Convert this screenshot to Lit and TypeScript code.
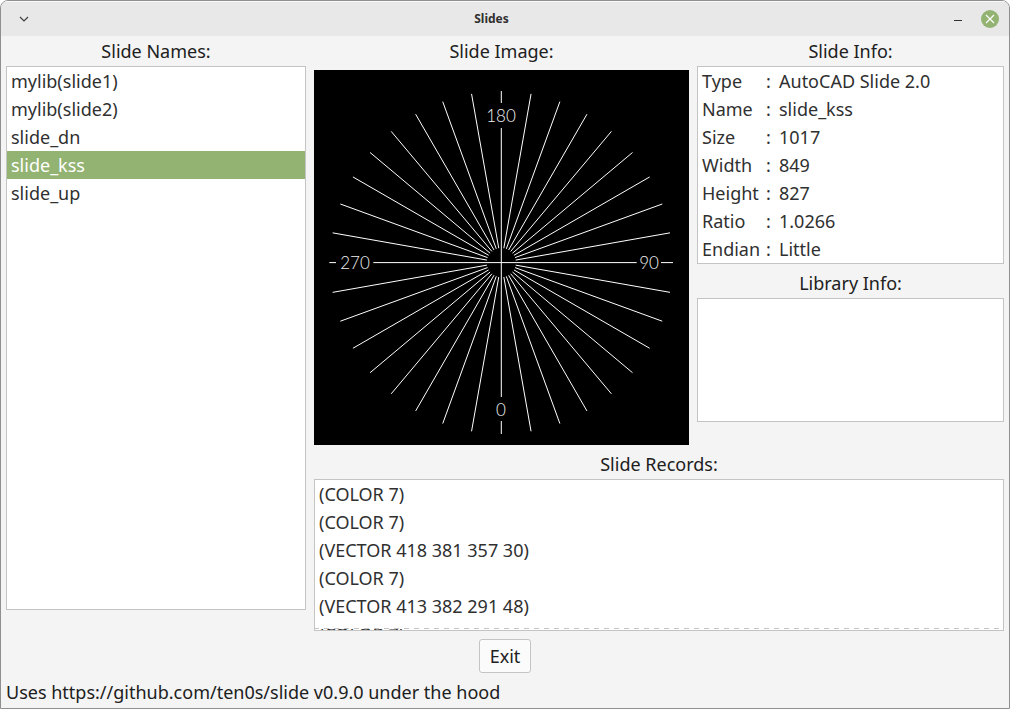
import { LitElement, html, svg, css } from "lit";
import { customElement, state } from "lit/decorators.js";

const NAMES = ["mylib(slide1)", "mylib(slide2)", "slide_dn", "slide_kss", "slide_up"];

const INFO: [string, string][] = [
  ["Type", "AutoCAD Slide 2.0"],
  ["Name", "slide_kss"],
  ["Size", "1017"],
  ["Width", "849"],
  ["Height", "827"],
  ["Ratio", "1.0266"],
  ["Endian", "Little"],
];

const RECORDS = [
  "(COLOR 7)",
  "(COLOR 7)",
  "(VECTOR 418 381 357 30)",
  "(COLOR 7)",
  "(VECTOR 413 382 291 48)",
  "(COLOR 7)",
];

/** Compass-like slide: rays every ten degrees, axes labelled in degrees. */
@customElement("slide-image")
export class SlideImage extends LitElement {
  static styles = css`
    :host { display: block; background: #000; }
    .canvas { display: block; width: 100%; height: auto; }
    .strokes { stroke: #fff; stroke-width: 1; fill: none; }
    .degrees {
      fill: #f0f0f0;
      font-family: "Lato", sans-serif;
      font-weight: 300;
      font-size: 17px;
      text-anchor: middle;
    }
  `;

  render() {
    const cx = 187.3;
    const cy = 192.6;
    const rays = [];
    for (let a = 10; a < 360; a += 10) {
      if (a % 90 === 0) continue;
      const s = Math.sin((a * Math.PI) / 180);
      const c = Math.cos((a * Math.PI) / 180);
      rays.push(svg`<line x1=${cx + 14.6 * s} y1=${cy + 14.6 * c} x2=${cx + 171.3 * s} y2=${cy + 171.3 * c} />`);
    }
    return html`
      <svg class="canvas" viewBox="0 0 375 375" role="img" aria-label="slide_kss">
        <g class="strokes">
          ${rays}
          <path d="M187.3 21V33M187.3 58V327M187.3 351V364" />
          <path d="M15.3 192.6H22M59.3 192.6H322.7M347 192.6H359" />
        </g>
        <g class="degrees">
          <text x="187" y="52">180</text>
          <text x="187" y="346">0</text>
          <text x="41" y="199">270</text>
          <text x="335" y="199">90</text>
        </g>
      </svg>
    `;
  }
}

@customElement("app-root")
export class AppRoot extends LitElement {
  static styles = css`
    :host {
      display: block;
      font-family: "Noto Sans", "Open Sans", sans-serif;
      font-size: 18px;
      line-height: 28px;
      color: #303030;
    }
    * { box-sizing: border-box; }
    .window {
      display: flex;
      flex-direction: column;
      min-height: 100vh;
      background: #f4f4f4;
      border: 1px solid #8f8f8f;
      border-radius: 8px 8px 0 0;
      overflow: hidden;
    }
    .titlebar {
      display: flex;
      align-items: center;
      height: 35px;
      padding: 0 10px 0 13px;
      background: #e8e8e8;
      border-top: 1px solid #fafafa;
    }
    .title {
      flex: 1;
      margin: 0;
      text-align: center;
      font-size: 12px;
      font-weight: 700;
      line-height: 18px;
    }
    .tool {
      display: block;
      padding: 0;
      border: 0;
      background: none;
      height: 18px;
    }
    .tool svg { display: block; }
    .controls { display: flex; gap: 14px; }
    .content {
      display: grid;
      grid-template-columns: minmax(0, 300fr) minmax(0, 375fr) minmax(0, 307fr);
      column-gap: 8px;
      row-gap: 4px;
      padding: 0 5px;
    }
    .names { grid-row: 1 / 3; display: flex; flex-direction: column; padding-bottom: 21px; }
    .records { grid-column: 2 / 4; }
    .heading {
      display: block;
      margin: 0;
      font-size: 18px;
      font-weight: 400;
      line-height: 30px;
      text-align: center;
      color: #202020;
    }
    .picture { margin-top: 4px; }
    .box {
      display: block;
      width: 100%;
      margin: 0;
      padding: 0;
      border: 1px solid #c4c4c4;
      border-radius: 0;
      background: #fff;
      color: inherit;
      font: inherit;
      outline: none;
      resize: none;
      scrollbar-width: none;
    }
    .box option {
      height: 28px;
      min-height: 28px;
      padding: 2px 4px 0;
      -webkit-text-fill-color: #303030;
    }
    .box option:checked {
      background: linear-gradient(#92b372, #92b372);
      -webkit-text-fill-color: #fff;
    }
    .names .box { flex: 1; min-height: 0; }
    .info { border-collapse: separate; border-spacing: 0; }
    .info th, .info td { padding: 0; text-align: left; font-weight: 400; }
    .info th { width: 68px; padding-left: 4px; }
    .info .colon { width: 13px; }
    .library { height: 124px; }
    .library-heading { margin-top: 4px; }
    .scroller { position: relative; }
    .scroller .box { height: 152px; }
    .more {
      position: absolute;
      left: 1px;
      right: 1px;
      bottom: 2px;
      height: 1px;
      background: repeating-linear-gradient(90deg, #c4c4c4 0 4px, #fff 4px 9px, #c4c4c4 9px 10px);
      pointer-events: none;
    }
    .actions { display: flex; justify-content: center; padding-top: 8px; }
    .exit {
      height: 34px;
      padding: 0 10px;
      border: 1px solid #c4c4c4;
      border-radius: 3px;
      background: #fbfbfb;
      color: #202020;
      font: inherit;
    }
    .status { margin: 0; padding: 5px 5px 0; color: #202020; }
  `;

  @state() private selected = "slide_kss";

  private pick(e: Event) {
    this.selected = (e.target as HTMLSelectElement).value;
  }

  render() {
    return html`
      <div class="window">
        <header class="titlebar">
          <button class="tool" aria-label="Window menu">
            <svg width="20" height="18" viewBox="0 0 20 18">
              <path d="M6 7l4 4 4-4" fill="none" stroke="#404040" stroke-width="1.2" />
            </svg>
          </button>
          <h1 class="title">Slides</h1>
          <div class="controls">
            <button class="tool" aria-label="Minimize">
              <svg width="18" height="18" viewBox="0 0 18 18">
                <path d="M5 10.5h8" stroke="#303030" />
              </svg>
            </button>
            <button class="tool" aria-label="Close">
              <svg width="18" height="18" viewBox="0 0 18 18">
                <circle cx="9" cy="9" r="9" fill="#92b372" />
                <path d="M5 5l8 8M13 5l-8 8" stroke="#fff" stroke-width="1.2" />
              </svg>
            </button>
          </div>
        </header>
        <main class="content">
          <section class="names">
            <label class="heading" for="names">Slide Names:</label>
            <select class="box" id="names" size="5" @change=${this.pick}>
              ${NAMES.map((n) => html`<option value=${n} ?selected=${n === this.selected}>${n}</option>`)}
            </select>
          </section>
          <section>
            <h2 class="heading">Slide Image:</h2>
            <slide-image class="picture"></slide-image>
          </section>
          <section>
            <h2 class="heading" id="info-heading">Slide Info:</h2>
            <table class="box info" aria-labelledby="info-heading">
              <tbody class="rows">
                ${INFO.map(
                  ([k, v]) => html`<tr><th scope="row">${k}</th><td class="colon">:</td><td>${v}</td></tr>`
                )}
              </tbody>
            </table>
            <label class="heading library-heading" for="library">Library Info:</label>
            <textarea class="box library" id="library" readonly></textarea>
          </section>
          <section class="records">
            <label class="heading" for="records">Slide Records:</label>
            <div class="scroller">
              <select class="box" id="records" size="5">
                ${RECORDS.map((r) => html`<option>${r}</option>`)}
              </select>
              <div class="more"></div>
            </div>
          </section>
        </main>
        <div class="actions"><button class="exit">Exit</button></div>
        <p class="status">Uses https://github.com/ten0s/slide v0.9.0 under the hood</p>
      </div>
    `;
  }
}
